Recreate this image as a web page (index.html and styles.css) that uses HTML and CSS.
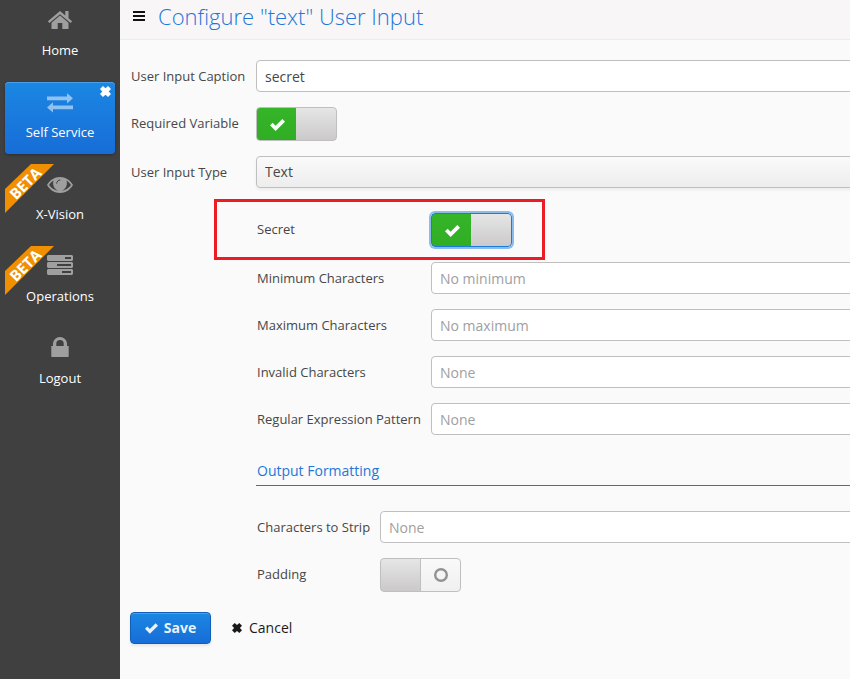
FILE: index.html
```html
<!DOCTYPE html>
<html lang="en">
<head>
<meta charset="utf-8">
<meta name="viewport" content="width=device-width, initial-scale=1">
<title>Configure "text" User Input</title>
<link rel="stylesheet" href="styles.css">
</head>
<body>
<svg class="defs" aria-hidden="true">
  <symbol id="check" viewBox="0 0 15 12"><path d="M2.700 3.700 0 6.300 5.600 12 15 2.700 12.300 0 5.600 6.700z"/></symbol>
  <symbol id="cross" viewBox="0 0 10 10"><path d="M2.700 0 5 2.100 7.300 0 10 2.700 7.900 5 10 7.300 7.300 10 5 7.900 2.700 10 0 7.300 2.100 5 0 2.700z"/></symbol>
</svg>
<div class="app">
  <nav class="sidebar" aria-label="Main">
    <a class="nav-item" href="#home">
      <svg class="nav-icon" viewBox="0 0 26 24"><path d="M13 3 .9 13.3l1.500 1.800L13 6.200l10.600 8.900 1.500-1.800-3.600-3.100V3h-3.200v4.500z"/><path d="M13 7.600 4.500 14.700V21h6.200v-6h4.600v6h6.200v-6.300z"/></svg>
      <span>Home</span>
    </a>
    <a class="nav-item active" href="#self-service">
      <svg class="nav-icon" viewBox="0 0 26 24"><path d="M0 6.500h20V3.200l6 5.100-6 5.100v-3.200H0zM26 15.500H6v-3.200l-6 5.100 6 5.100v-3.300h20z"/></svg>
      <span>Self Service</span>
      <svg class="nav-close" viewBox="0 0 10 10"><use href="#cross"/></svg>
    </a>
    <a class="nav-item" href="#x-vision">
      <svg class="nav-icon" viewBox="0 0 26 24"><path fill-rule="evenodd" d="M13 5C7.500 5 2.800 8 0 13c2.800 5 7.500 8 13 8s10.200-3 13-8C23.200 8 18.500 5 13 5zM2 13c1.200-2 2.600-3.400 4.500-4.600-1.300 4.600.8 9.300 5.500 10.300-4.200-.3-7.700-2.200-10-5.700zm22 0c-2.300 3.500-5.800 5.400-10 5.700 4.700-1 6.800-5.700 5.500-10.300C21.400 9.600 22.800 11 24 13z"/><path class="glint" d="M9.700 11.600a3.500 3.500 0 0 1 3.600-3.600"/></svg>
      <span>X-Vision</span>
      <span class="ribbon"><b>BETA</b></span>
    </a>
    <a class="nav-item" href="#operations">
      <svg class="nav-icon" viewBox="0 0 26 24"><path fill-rule="evenodd" d="M1 1h24l1 1v4l-1 1H1L0 6V2zM18 3v2h6V3zM1 8h24l1 1v4l-1 1H1l-1-1V9zM10 10v2h14v-2zM1 15h24l1 1v4l-1 1H1l-1-1v-4zM15 17v2h9v-2z"/></svg>
      <span>Operations</span>
      <span class="ribbon"><b>BETA</b></span>
    </a>
    <a class="nav-item" href="#logout">
      <svg class="nav-icon" viewBox="0 0 26 24"><path fill-rule="evenodd" d="M6 10V7.500a7 6.500 0 0 1 14 0V10h1.700v10.200q0 .8-.8.8H5.100q-.8 0-.8-.8V10zm3.300 0h7.400V7.500a3.700 3.500 0 0 0-7.400 0z"/></svg>
      <span>Logout</span>
    </a>
  </nav>

  <main class="main">
    <header class="page-head">
      <button class="menu" type="button" aria-label="Menu"><svg viewBox="0 0 12 10"><path d="M0 0h12v2H0zM0 4h12v2H0zM0 8h12v2H0z"/></svg></button>
      <h1>Configure "text" User Input</h1>
    </header>

    <form class="form">
      <div class="row">
        <label for="caption">User Input Caption</label>
        <input class="field" id="caption" type="text" value="secret">
      </div>
      <div class="row">
        <label for="required">Required Variable</label>
        <span class="toggle"><input type="checkbox" id="required" checked><svg class="tick"><use href="#check"/></svg></span>
      </div>
      <div class="row">
        <label for="type">User Input Type</label>
        <select class="field" id="type"><option>Text</option></select>
      </div>

      <section class="options">
        <div class="row highlight">
          <label for="secret">Secret</label>
          <span class="toggle focused"><input type="checkbox" id="secret" checked><svg class="tick"><use href="#check"/></svg></span>
        </div>
        <div class="row">
          <label for="min">Minimum Characters</label>
          <input class="field" id="min" type="text" placeholder="No minimum">
        </div>
        <div class="row">
          <label for="max">Maximum Characters</label>
          <input class="field" id="max" type="text" placeholder="No maximum">
        </div>
        <div class="row">
          <label for="invalid">Invalid Characters</label>
          <input class="field" id="invalid" type="text" placeholder="None">
        </div>
        <div class="row">
          <label for="pattern">Regular Expression Pattern</label>
          <input class="field" id="pattern" type="text" placeholder="None">
        </div>
      </section>

      <section class="formatting">
        <h2>Output Formatting</h2>
        <div class="row">
          <label for="strip">Characters to Strip</label>
          <input class="field" id="strip" type="text" placeholder="None">
        </div>
        <div class="row">
          <label for="padding">Padding</label>
          <span class="toggle"><input type="checkbox" id="padding"><svg class="ring" viewBox="0 0 14 14"><circle cx="7" cy="7" r="5.800"/></svg></span>
        </div>
      </section>

      <div class="actions">
        <button class="save" type="submit"><svg><use href="#check"/></svg>Save</button>
        <button class="cancel" type="button"><svg><use href="#cross"/></svg>Cancel</button>
      </div>
    </form>
  </main>
</div>
</body>
</html>
```
FILE: styles.css
```css
*, *::before { box-sizing: border-box; }

body {
  margin: 0;
  background: #fafafa;
  color: #474747;
  font: 13px/20px "Open Sans", "Noto Sans", sans-serif;
}

button, input, select { font: inherit; color: inherit; }
button { cursor: pointer; }
.defs { display: none; }

.app {
  display: flex;
  min-height: 100vh;
  overflow: hidden;
}

/* Sidebar */
.sidebar {
  flex: 0 0 120px;
  display: flex;
  flex-direction: column;
  gap: 10px;
  padding: 0 5px;
  background: #404040;
}

.nav-item {
  position: relative;
  display: flex;
  flex-direction: column;
  align-items: center;
  gap: 8px;
  height: 72px;
  padding-top: 8px;
  border-radius: 4px;
  color: #fff;
  line-height: 20px;
  text-decoration: none;
}

.nav-icon {
  width: 26px;
  height: 24px;
  fill: #9f9f9f;
}

.nav-item.active {
  background: linear-gradient(#1b87e3, #176dd7);
  box-shadow: inset 0 1px #4a9fe9, 0 1px 3px rgba(0, 0, 0, .3);
}
.active .nav-icon { fill: #8fc2f1; }

.nav-close {
  position: absolute;
  top: 4px;
  right: 4px;
  width: 11px;
  height: 11px;
  fill: #fff;
}

.glint { fill: none; stroke: #404040; stroke-width: 1; }

.ribbon {
  position: absolute;
  top: 0;
  left: 0;
  width: 49px;
  height: 49px;
  background: #f09000;
  clip-path: polygon(26px 0, 49px 0, 0 49px, 0 25px);
}
.ribbon b {
  position: absolute;
  top: 9px;
  left: -5px;
  width: 50px;
  color: #fff;
  font-size: 15px;
  font-weight: 700;
  text-align: center;
  transform: rotate(-45deg);
}

/* Page */
.main { flex: 1; min-width: 0; }

.page-head {
  display: flex;
  align-items: center;
  gap: 13px;
  height: 40px;
  padding: 0 13px 7px;
  background: #f8f6f7;
  border-bottom: 1px solid #ececec;
}
.page-head h1 {
  margin: 0;
  color: #1e77d9;
  font-size: 22px;
  font-weight: 300;
  line-height: 30px;
}
.menu {
  display: flex;
  padding: 0;
  border: 0;
  background: none;
}
.menu svg { width: 12px; height: 10px; fill: #111; }

.form {
  display: flex;
  flex-direction: column;
  gap: 15px;
  margin-right: -12px;
  padding: 20px 0 0 11px;
}

.row {
  display: grid;
  grid-template-columns: 125px 1fr;
  align-items: start;
}
.row label { line-height: 32px; }

.field {
  width: 100%;
  height: 32px;
  padding: 0 8px;
  border: 1px solid #c0bfbf;
  border-radius: 4px;
  background: #fff;
  font-size: 14px;
}
.field::placeholder { color: #a0a0a0; opacity: 1; }

select.field {
  appearance: none;
  background: linear-gradient(#fafafa, #ededed);
  box-shadow: 0 2px 3px rgba(0, 0, 0, .06);
}

.toggle {
  position: relative;
  width: 81px;
  height: 34px;
}
.toggle input {
  appearance: none;
  display: block;
  width: 100%;
  height: 100%;
  margin: 0;
  border: 1px solid #bfbfbf;
  border-radius: 4px;
  background:
    linear-gradient(#bfbfbf, #bfbfbf) 39px 0 / 1px 100% no-repeat,
    linear-gradient(#e6e6e6, #cbc9ca) 0 0 / 40px 100% no-repeat,
    linear-gradient(#f9f9f9, #f0f0f0);
}
.toggle input:checked {
  background:
    linear-gradient(#36b529, #30ad24) 0 0 / 39px 100% no-repeat,
    linear-gradient(#e6e6e6, #cbc9ca);
}
.toggle svg { position: absolute; pointer-events: none; }
.tick {
  top: 12px;
  left: 14px;
  width: 15px;
  height: 12px;
  fill: #fff;
}
.ring {
  top: 10px;
  left: 54px;
  width: 14px;
  height: 14px;
  fill: none;
  stroke: #929292;
  stroke-width: 2.4;
}
.toggle.focused input {
  border-color: #1b7ade;
  box-shadow: 0 0 0 2px #8bbcec;
}

/* Nested settings */
.options {
  display: flex;
  flex-direction: column;
  gap: 15px;
  margin: 10px 0 0 126px;
}
.options .row { grid-template-columns: 174px 1fr; }

.highlight { position: relative; }
.highlight::before {
  content: "";
  position: absolute;
  top: -14px;
  left: -43px;
  width: 331px;
  height: 61px;
  border: 3px solid #ed1c24;
  pointer-events: none;
}

.formatting {
  display: flex;
  flex-direction: column;
  gap: 15px;
  margin: 10px 0 0 125px;
}
.formatting h2 {
  margin: 0 0 10px;
  padding-bottom: 4px;
  border-bottom: 1px solid #1e77d9;
  color: #1e77d9;
  font-size: 14px;
  font-weight: 400;
  line-height: 21px;
  text-indent: 1px;
}
.formatting .row {
  grid-template-columns: 123px 1fr;
  padding-left: 1px;
}

.actions {
  display: flex;
  align-items: center;
  gap: 20px;
  margin: 5px 0 0 -1px;
  font-size: 14px;
}
.actions button {
  display: flex;
  align-items: center;
  justify-content: center;
  gap: 6px;
  height: 32px;
}
.save {
  width: 81px;
  padding: 0;
  border: 1px solid #125fb8;
  border-radius: 4px;
  background: linear-gradient(#1b87e3, #176dd7);
  box-shadow: inset 0 1px #4a9fe9, 0 2px 3px rgba(0, 0, 0, .08);
}
.actions .save { color: #e9f3fc; font-weight: 700; }
.save svg { width: 13px; height: 11px; fill: #e9f3fc; }
.cancel {
  padding: 0;
  border: 0;
  background: none;
}
.actions .cancel { color: #1a1a1a; }
.cancel svg { width: 12px; height: 10px; fill: #1a1a1a; }
```
